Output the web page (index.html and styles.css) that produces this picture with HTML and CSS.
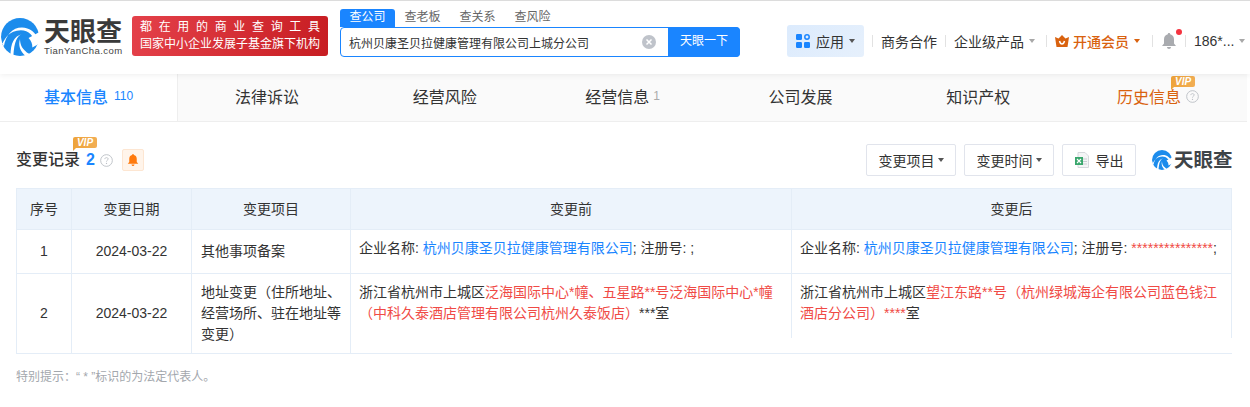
FILE: index.html
```html
<!DOCTYPE html>
<html lang="zh-CN">
<head>
<meta charset="utf-8">
<title>变更记录</title>
<link rel="stylesheet" href="styles.css">
</head>
<body>
<svg class="defs" width="0" height="0" aria-hidden="true">
  <symbol id="swirl" viewBox="0 0 40 40">
    <circle cx="20" cy="20" r="20" fill="#1c8cec"/>
    <path d="M40 25C37 15 30 10 22 10C12 10 5 18 3 30C1 26 0 23 0 20L0 33C2 22 9 13 21 13C29 13 35 19 37 29Z" fill="#fff"/>
    <path d="M40 15L29 21C32 24 33 27 33 31L40 27Z" fill="#fff"/>
    <path d="M22 17C17 19 14 24 13 40L10 40C10 26 14 19 22 17Z" fill="#fff"/>
    <path d="M20 22C20 28 22 33 30 38L26 40C20 35 18 29 20 22Z" fill="#fff"/>
  </symbol>
  <symbol id="help" viewBox="0 0 14 14">
    <circle cx="7" cy="7" r="6.3" fill="none" stroke="#bcc0c6" stroke-width="1"/>
    <path d="M5.2 5.5C5.2 4.5 6 3.900 7 3.900C8 3.900 8.800 4.500 8.800 5.400C8.800 6.600 7 6.700 7 8.200" fill="none" stroke="#bcc0c6" stroke-width="1"/>
    <circle cx="7" cy="10.100" r=".7" fill="#bcc0c6"/>
  </symbol>
  <symbol id="bell" viewBox="0 0 16 18">
    <path d="M8 1C8.700 1 9.200 1.500 9.200 2.200C11.600 2.800 13 4.800 13 7.200V11.500L15 14H1L3 11.500V7.200C3 4.800 4.400 2.800 6.800 2.200C6.800 1.500 7.300 1 8 1Z" fill="currentColor"/>
    <path d="M6 15H10C10 16.200 9.100 17 8 17C6.900 17 6 16.200 6 15Z" fill="currentColor"/>
  </symbol>
</svg>

<header class="topbar">
  <a class="logo">
    <svg class="logo-mark"><use href="#swirl"/></svg>
    <span class="logo-words">
      <span class="logo-cn">天眼查</span>
      <span class="logo-en">TianYanCha.com</span>
    </span>
  </a>
  <div class="banner">
    <span class="banner-top">都在用的商业查询工具</span>
    <span class="banner-bottom">国家中小企业发展子基金旗下机构</span>
  </div>
  <div class="search">
    <div class="search-tabs">
      <span class="search-tab search-tab-on">查公司</span>
      <span class="search-tab">查老板</span>
      <span class="search-tab">查关系</span>
      <span class="search-tab">查风险</span>
    </div>
    <div class="search-box">
      <span class="search-text">杭州贝康圣贝拉健康管理有限公司上城分公司</span>
      <svg class="search-clear" viewBox="0 0 14 14">
        <circle cx="7" cy="7" r="7" fill="#bfc3ca"/>
        <path d="M4.500 4.500L9.500 9.500M9.500 4.500L4.500 9.500" stroke="#fff" stroke-width="1.500"/>
      </svg>
      <span class="search-btn">天眼一下</span>
    </div>
  </div>
  <nav class="nav">
    <span class="nav-apps">
      <svg class="apps-icon" viewBox="0 0 14 14">
        <rect x="0" y="0" width="6" height="6" rx="1.200" fill="#1a85ff"/>
        <circle cx="11" cy="3" r="2.200" fill="none" stroke="#1a85ff" stroke-width="1.500"/>
        <rect x="0" y="8" width="6" height="6" rx="1.200" fill="#1a85ff"/>
        <rect x="8" y="8" width="6" height="6" rx="1.200" fill="#1a85ff"/>
      </svg>
      应用<i class="caret caret-dark"></i>
    </span>
    <i class="nav-sep"></i>
    <span class="nav-item">商务合作</span>
    <i class="nav-sep"></i>
    <span class="nav-item nav-product">企业级产品<i class="caret"></i></span>
    <i class="nav-sep"></i>
    <span class="nav-item nav-vip">
      <svg class="crown" viewBox="0 0 14 12">
        <path d="M0 2L3.500 3.500L7 0L10.500 3.500L14 2L12.500 12H1.500Z" fill="#d9620f"/>
        <path d="M4.500 6C5 8 6 9 7 9C8 9 9 8 9.500 6" fill="none" stroke="#fff" stroke-width="1.500"/>
      </svg>
      开通会员<i class="caret caret-orange"></i>
    </span>
    <i class="nav-sep"></i>
    <span class="nav-bell">
      <svg class="bell-icon"><use href="#bell"/></svg>
      <i class="bell-dot"></i>
    </span>
    <i class="nav-sep"></i>
    <span class="nav-item">186*...<i class="caret"></i></span>
  </nav>
</header>

<div class="tabs">
  <span class="tab tab-on">基本信息<em class="tab-count">110</em></span>
  <span class="tab">法律诉讼</span>
  <span class="tab">经营风险</span>
  <span class="tab">经营信息<em class="tab-count tab-count-grey">1</em></span>
  <span class="tab">公司发展</span>
  <span class="tab">知识产权</span>
  <span class="tab tab-vip">
    <span class="tab-label">历史信息<b class="vip vip-tab">VIP</b></span>
    <svg class="help"><use href="#help"/></svg>
  </span>
</div>

<main class="section">
  <div class="section-head">
    <h2 class="section-title">变更记录<b class="vip vip-title">VIP</b></h2>
    <span class="section-count">2</span>
    <svg class="help help-title"><use href="#help"/></svg>
    <span class="alert"><svg class="alert-icon"><use href="#bell"/></svg></span>
    <div class="tools">
      <span class="tool tool-wide">变更项目<i class="caret caret-dark"></i></span>
      <span class="tool tool-wide">变更时间<i class="caret caret-dark"></i></span>
      <span class="tool tool-export">
        <svg class="xls" viewBox="0 0 14 16">
          <path d="M3 .5H10L13.500 4V15.500H3Z" fill="#f4f5f6" stroke="#d5d8dc"/>
          <path d="M8 7H12M8 9.500H12M8 12H12" stroke="#c9cdd2"/>
          <rect x="0" y="5" width="8" height="8" fill="#3aa76d"/>
          <path d="M2 7L6 11M6 7L2 11" stroke="#fff" stroke-width="1.100"/>
        </svg>
        导出
      </span>
      <span class="mini-logo">
        <svg class="mini-mark"><use href="#swirl"/></svg>
        <span class="mini-cn">天眼查</span>
      </span>
    </div>
  </div>

  <table class="grid">
    <colgroup>
      <col class="c1"><col class="c2"><col class="c3"><col class="c4"><col class="c5">
    </colgroup>
    <thead>
      <tr>
        <th>序号</th><th>变更日期</th><th>变更项目</th><th>变更前</th><th>变更后</th>
      </tr>
    </thead>
    <tbody>
      <tr class="row-one">
        <td class="center">1</td>
        <td class="center">2024-03-22</td>
        <td class="item">其他事项备案</td>
        <td class="text">企业名称: <span class="link">杭州贝康圣贝拉健康管理有限公司</span>; 注册号: ;</td>
        <td class="text">企业名称: <span class="link">杭州贝康圣贝拉健康管理有限公司</span>; 注册号: <span class="red">***************</span>;</td>
      </tr>
      <tr>
        <td class="center">2</td>
        <td class="center">2024-03-22</td>
        <td class="item">地址变更（住所地址、经营场所、驻在地址等变更）</td>
        <td class="cut"><div class="cut-inner">浙江省杭州市上城区<span class="red">泛海国际中心*幢、五星路**号泛海国际中心*幢（中科久泰酒店管理有限公司杭州久泰饭店）</span>***室</div></td>
        <td class="cut"><div class="cut-inner">浙江省杭州市上城区<span class="red">望江东路**号（杭州绿城海企有限公司蓝色钱江酒店分公司）****</span>室</div></td>
      </tr>
    </tbody>
  </table>
  <p class="note">特别提示：“ * ”标识的为法定代表人。</p>
</main>
</body>
</html>
```
FILE: styles.css
```css
* { box-sizing: border-box; }
html, body { margin: 0; padding: 0; }
body {
  width: 1250px;
  height: 407px;
  overflow: hidden;
  background: #fff;
  color: #333;
  font-family: "Liberation Sans", "Noto Sans CJK SC", sans-serif;
  font-size: 14px;
}
.defs { position: absolute; }
em, i { font-style: normal; }

.topbar {
  position: relative;
  z-index: 2;
  display: flex;
  height: 74px;
  padding: 8px 0 0;
  border-top: 1px solid #dcdcdc;
  background: #fff;
  box-shadow: 0 1px 6px rgba(0, 0, 0, .07);
}
.logo { display: flex; align-items: center; width: 132px; height: 48px; margin-top: 4px; }
.logo-mark { width: 38px; height: 38px; margin-left: 1px; flex: none; }
.logo-words { display: flex; flex-direction: column; margin-left: 5px; }
.logo-cn { font-size: 26px; font-weight: 700; line-height: 26px; color: #3a3a3a; white-space: nowrap; }
.logo-en { font-size: 9.500px; line-height: 11px; letter-spacing: .45px; color: #444; white-space: nowrap; }

.banner {
  display: flex;
  flex-direction: column;
  justify-content: center;
  width: 196px;
  height: 40px;
  margin-top: 7px;
  padding: 0 8px;
  border-radius: 3px;
  background: linear-gradient(100deg, #e4414a, #c71d22);
  color: #fff;
  font-size: 12px;
  line-height: 17px;
}
.banner-top { display: block; letter-spacing: 6.670px; white-space: nowrap; }
.banner-bottom { display: block; white-space: nowrap; }

.search { width: 400px; margin-left: 12px; }
.search-tabs { display: flex; height: 18px; font-size: 12px; line-height: 17px; color: #666; }
.search-tab { width: 55px; text-align: center; }
.search-tab-on { border-radius: 3px 3px 0 0; background: #1a85ff; color: #fff; }
.search-box {
  display: flex;
  align-items: center;
  height: 30px;
  border: 1px solid #1a85ff;
  border-radius: 4px;
  font-size: 12px;
}
.search-text { flex: 1; padding-left: 8px; color: #333; }
.search-clear { width: 14px; height: 14px; margin-right: 12px; }
.search-btn {
  width: 72px;
  height: 30px;
  margin: 0 -1px 0 0;
  border-radius: 0 4px 4px 0;
  background: #1a85ff;
  color: #fff;
  line-height: 28px;
  text-align: center;
}

.nav { display: flex; align-items: center; height: 32px; margin: 16px 0 0 47px; white-space: nowrap; }
.nav-apps {
  display: flex;
  align-items: center;
  width: 77px;
  height: 32px;
  padding: 0 0 1px 9px;
  border-radius: 3px;
  background: linear-gradient(135deg, #dcebfd, #e6f0fc);
}
.apps-icon { width: 14px; height: 14px; margin-right: 6px; }
.nav-sep { width: 1px; height: 12px; margin: 0 8px; background: #e2e2e2; }
.nav-item { display: flex; align-items: center; padding-bottom: 1px; }
.nav-product { margin-right: 3px; }
.nav-vip { color: #d9620f; font-weight: 500; margin-right: 4px; }
.crown { width: 14px; height: 12px; margin-right: 4px; }
.nav-bell { position: relative; display: block; width: 16px; height: 18px; color: #a9abaf; }
.bell-icon { display: block; width: 16px; height: 18px; }
.bell-dot { position: absolute; top: -3px; right: -5px; width: 6px; height: 6px; border-radius: 50%; background: #f5333f; }

.caret {
  display: inline-block;
  width: 0;
  height: 0;
  margin-left: 5px;
  border-top: 4px solid #a8a8a8;
  border-left: 3.500px solid transparent;
  border-right: 3.500px solid transparent;
}
.caret-dark { border-top-color: #555; }
.caret-orange { border-top-color: #d9620f; }

.tabs {
  display: flex;
  width: 1247px;
  height: 48px;
  padding-bottom: 3px;
  border-bottom: 1px solid #eeeeee;
  background: #fafafa;
  font-size: 16px;
}
.tab {
  flex: 1;
  display: flex;
  align-items: center;
  justify-content: center;
  color: #333;
}
.tab-on {
  flex: none;
  width: 178px;
  height: 47px;
  padding-bottom: 3px;
  border-right: 1px solid #eee;
  background: #fff;
  color: #1a85ff;
  font-weight: 500;
}
.tab-count { margin-left: 6px; font-size: 12px; font-weight: 400; }
.tab-count-grey { margin-left: 4px; color: #aaa; }
.tab-vip { color: #d9620f; padding-left: 2px; }
.tab-label { position: relative; }
.help { width: 13px; height: 13px; margin-left: 5px; }

.vip {
  position: absolute;
  width: 24px;
  height: 11px;
  border-radius: 2px 2px 2px 0;
  background: linear-gradient(90deg, #eea33a, #f2ae54);
  color: #fff;
  font-family: "Liberation Sans", sans-serif;
  font-size: 10px;
  font-style: italic;
  font-weight: 700;
  line-height: 11px;
  text-align: center;
}
.vip::after {
  content: "";
  position: absolute;
  left: 0;
  top: 11px;
  border-top: 3px solid #eea33a;
  border-right: 3px solid transparent;
}
.vip-tab { right: -14px; top: -8px; }
.vip-title { left: 57px; top: -12px; }

.section { padding: 0 18px 0 16px; }
.section-head { display: flex; align-items: center; height: 66px; padding-top: 10px; }
.section-title { position: relative; margin: 0; font-size: 16px; font-weight: 500; line-height: 22px; color: #333; }
.section-count { margin-left: 6px; color: #1a85ff; font-size: 16px; font-weight: 700; }
.help-title { margin-left: 5px; }
.alert {
  display: flex;
  align-items: center;
  justify-content: center;
  width: 22px;
  height: 22px;
  margin-left: 9px;
  border: 1px solid #fde6d2;
  border-radius: 2px;
  background: #fff4ea;
  color: #ff7a0d;
}
.alert-icon { width: 12px; height: 14px; }

.tools { display: flex; align-items: center; gap: 8px; margin-left: auto; }
.tool {
  display: flex;
  align-items: center;
  justify-content: center;
  height: 32px;
  padding-bottom: 1px;
  border: 1px solid #e1e4ec;
  border-radius: 2px;
}
.tool-wide { width: 90px; }
.tool-wide .caret { margin-left: 3px; }
.tool-export { width: 74px; }
.xls { width: 14px; height: 16px; margin-right: 7px; }
.mini-logo { display: flex; align-items: center; width: 80px; margin-left: 8px; }
.mini-mark { width: 20px; height: 20px; flex: none; }
.mini-cn { margin-left: 2px; font-size: 19.500px; font-weight: 700; line-height: 22px; color: #3f4448; white-space: nowrap; }

.grid {
  width: 1216px;
  table-layout: fixed;
  border-collapse: separate;
  border-spacing: 0;
  border-top: 1px solid #e4edf7;
  border-left: 1px solid #e4edf7;
  line-height: 21px;
}
.c1 { width: 55px; }
.c2 { width: 120px; }
.c3 { width: 159px; }
.c4 { width: 441px; }
.c5 { width: 440px; }
.grid th, .grid td { border-right: 1px solid #e4edf7; border-bottom: 1px solid #e4edf7; }
.grid th { height: 41px; background: #edf4fc; font-weight: 400; color: #333; }
.row-one td { height: 44px; }
.center { text-align: center; }
.item { padding: 8px 9px; }
.text { padding: 8px 8px 14px; vertical-align: top; }
.link { color: #1a85ff; }
.red { color: #f04a45; }
.grid .cut { padding: 0; border-right: 0; vertical-align: top; }
.cut-inner { height: 64px; padding: 8px 14px 0 8px; border-right: 1px solid #e4edf7; }

.note { margin: 14px 0 0; font-size: 12px; line-height: 18px; color: #a3a7ad; }
```
